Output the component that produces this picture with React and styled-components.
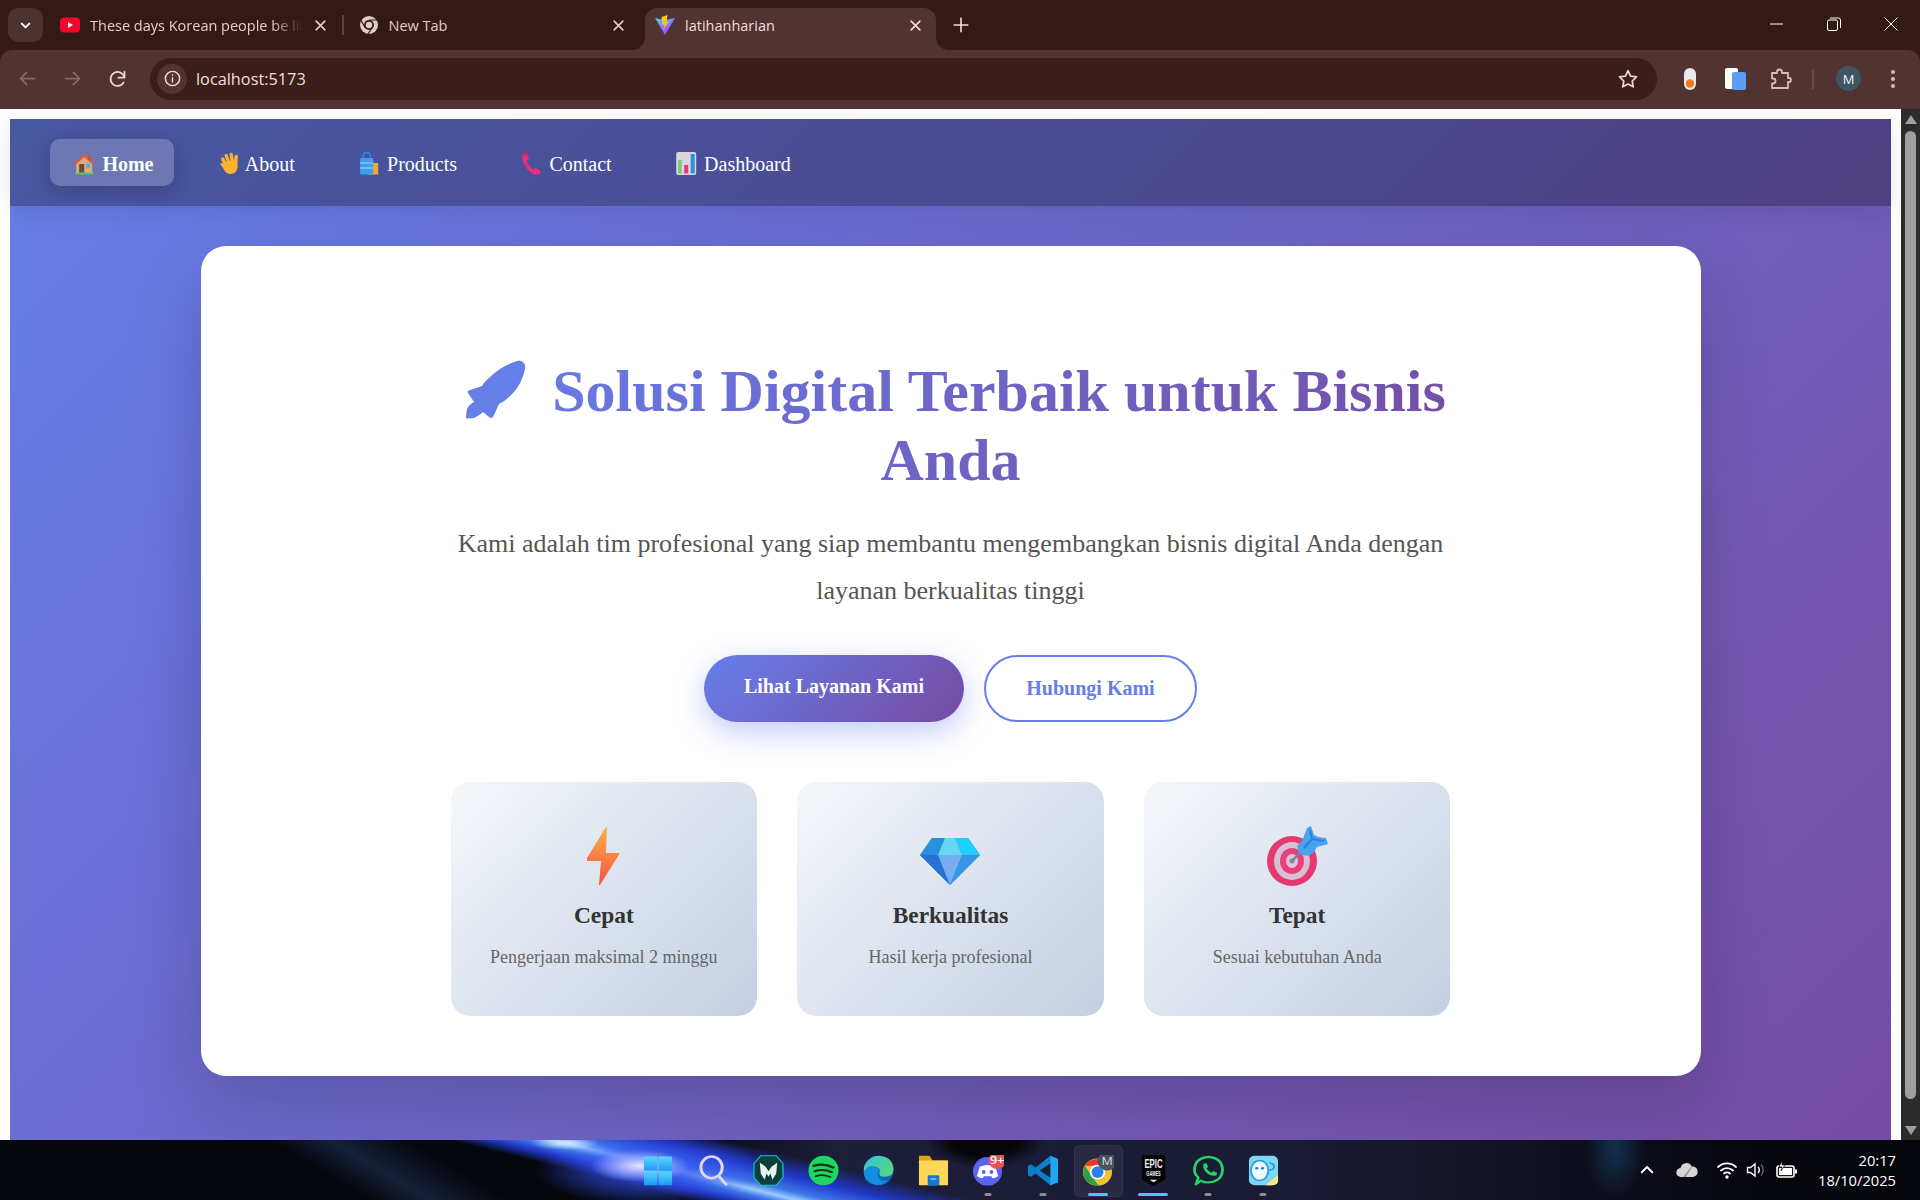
import React from "react";
import styled, { createGlobalStyle } from "styled-components";

const Global = createGlobalStyle`
  html, body { margin: 0; padding: 0; height: 100%; overflow: hidden; background: #fff; }
  #root { height: 100%; }
  * { box-sizing: border-box; }
`;

const Screen = styled.div`
  width: 1920px; height: 1200px; display: flex; flex-direction: column; overflow: hidden;
  font-family: "Liberation Serif", "Times New Roman", serif;
`;

/* ---------- browser chrome ---------- */
const BrowserFrame = styled.header`
  height: 109px; flex: none; background: #331a17; display: flex; flex-direction: column;
  font-family: "Open Sans", "Noto Sans", sans-serif;
`;
const TabStrip = styled.div`
  height: 50px; flex: none; display: flex; align-items: flex-end; padding-left: 8px;
`;
const TabSearch = styled.button`
  width: 35px; height: 34px; margin: 0 5px 8px 0; border: 0; border-radius: 10px; background: #4c3230;
  display: flex; align-items: center; justify-content: center; padding: 0;
`;
const Tab = styled.div`
  position: relative; width: ${p => (p.$active ? "291px" : "298.5px")}; height: 42px;
  display: flex; align-items: center; gap: 10px;
  padding: 0 ${p => (p.$active ? "13px" : "19px")} 8px ${p => (p.$active ? "10px" : "12px")};
  background: ${p => (p.$active ? "#513331" : "transparent")};
  border-radius: 12px 12px 0 0;
  color: ${p => (p.$active ? "#f0dcd8" : "#e4cdc8")};
  font-size: 14.5px;
`;
const TabFlare = styled.span`
  position: absolute; bottom: 0; width: 12px; height: 12px;
  ${p => (p.$side === "left" ? "left: -12px;" : "right: -12px;")}
  background: radial-gradient(circle at ${p => (p.$side === "left" ? "0 0" : "100% 0")}, transparent 11.5px, #513331 12px);
`;
const TabDivider = styled.span`
  position: absolute; right: 3px; top: 7px; width: 1.5px; height: 20px; background: #5d4340;
`;
const TabTitle = styled.span`
  flex: 1; white-space: nowrap; overflow: hidden; min-width: 0;
  ${p => p.$fade && "mask-image: linear-gradient(90deg, #000 85%, transparent 100%);"}
`;
const NewTab = styled.div`
  margin: 0 0 8px 13px; width: 24px; height: 34px; display: flex; align-items: center; justify-content: center;
`;
const WindowControls = styled.div`
  margin-left: auto; align-self: flex-start; display: flex; height: 48px; align-items: center;
  padding-right: 22px; gap: 43px;
`;
const Toolbar = styled.div`
  height: 59px; flex: none; background: #513331; border-radius: 12px 12px 0 0;
  border-bottom: 2px solid #4a3331; display: flex; align-items: center; padding: 0 20px 0 17px;
`;
const NavIcons = styled.div`
  display: flex; align-items: center; gap: 24px; width: 133px; flex: none;
`;
const Omnibox = styled.div`
  width: 1507px; height: 42px; flex: none; background: #3b1e1c; border-radius: 21px; display: flex;
  align-items: center; padding: 0 18px 0 7px; color: #f3dfda; font-size: 16.3px; gap: 9px;
`;
const InfoChip = styled.span`
  width: 30px; height: 30px; border-radius: 50%; background: #513331; display: flex; align-items: center; justify-content: center;
`;
const Url = styled.span`flex: 1;`;
const ExtensionBar = styled.div`
  display: flex; align-items: center; flex: none; margin-left: 21px; gap: 21px;
`;
const ToolDivider = styled.span`width: 2px; height: 20px; background: #6b4c49; margin: 0 0 0 -1px;`;
const Avatar = styled.span`
  width: 25px; height: 25px; border-radius: 50%; background: #3f5662; color: #eef2f4; font-size: 13px;
  display: flex; align-items: center; justify-content: center; margin-left: 1px; margin-right: -1px;
`;

/* ---------- viewport ---------- */
const Viewport = styled.div`
  flex: 1; min-height: 0; display: flex; background: #fff;
`;
const PageArea = styled.div`
  flex: 1; min-width: 0; padding: 10px 10px 0; overflow: hidden;
`;
const Page = styled.div`
  height: 1080px;
  background: linear-gradient(135deg, #667eea 0%, #764ba2 100%);
`;
const Nav = styled.nav`
  height: 87px; padding: 20px 40px; display: flex; gap: 20px; align-items: center;
  background: rgba(0, 0, 0, 0.3);
  box-shadow: 0 5px 25px rgba(0, 0, 0, 0.1);
`;
const NavItem = styled.a`
  height: 47px; padding: 3px ${p => (p.$active ? 21 : 20)}px 0 20px; display: flex; align-items: center; gap: 4px;
  color: #fff; font-size: 20px; border-radius: 10px; font-weight: ${p => (p.$active ? 700 : 400)};
  ${p => p.$active && "margin-right: -2.2px; background: rgba(255,255,255,0.2); box-shadow: 0 5px 19px rgba(0,0,0,0.2);"}
`;
const Main = styled.main`
  width: 1500px; height: 830px; margin: 40px auto 0; background: #fff; border-radius: 25px;
  padding: 111px 0 0; box-shadow: 0 25px 70px rgba(0, 0, 0, 0.18);
`;
const Hero = styled.div`
  width: 1000px; margin: 0 auto; text-align: center;
`;
const Title = styled.h1`
  margin: 0; font-size: 60px; font-weight: 700; line-height: 69px;
  background: linear-gradient(135deg, #667eea 0%, #764ba2 100%);
  -webkit-background-clip: text; background-clip: text; color: transparent;
`;
const RocketMark = styled.svg`
  width: 60px; height: 59px; margin: 0 26px 0 11px; vertical-align: -8px;
`;
const Lead = styled.p`
  margin: 26px 0 40px; font-size: 26px; line-height: 46.8px; color: #555;
`;
const Actions = styled.div`
  display: flex; justify-content: center; gap: 20px;
`;
const PrimaryButton = styled.button`
  width: 260px; height: 67px; border: 0; border-radius: 34px; padding: 0 0 4px; color: #fff;
  font: 700 20px "Liberation Serif", serif;
  background: linear-gradient(135deg, #667eea 0%, #764ba2 100%);
  box-shadow: 0 10px 31px rgba(102, 126, 234, 0.4);
`;
const SecondaryButton = styled.button`
  width: 213px; height: 67px; border: 2.5px solid #667eea; border-radius: 34px; padding: 0; color: #667eea;
  font: 700 20px "Liberation Serif", serif; background: #fff;
`;
const Features = styled.div`
  display: grid; grid-template-columns: repeat(3, 1fr); gap: 40px; margin-top: 60px;
`;
const Feature = styled.article`
  height: 234px; padding-top: 44px; border-radius: 19px; display: flex; flex-direction: column; align-items: center;
  background: linear-gradient(135deg, #f5f7fa 0%, #c3cfe2 100%);
`;
const FeatureIcon = styled.svg`width: 62px; height: 60px; flex: none;`;
const FeatureTitle = styled.h3`
  margin: 16px 0 0; font-size: 23.4px; line-height: 27px; font-weight: 700; color: #333;
`;
const FeatureText = styled.p`
  margin: 18px 0 0; font-size: 18px; line-height: 20px; color: #666;
`;
const Scrollbar = styled.div`
  width: 19px; flex: none; background: #2c2c2c; display: flex; flex-direction: column; align-items: center;
  padding: 6px 0 5px;
`;
const ScrollThumb = styled.div`
  width: 11px; height: 968px; margin-top: 7px; border-radius: 6px; background: #9f9f9f;
`;
const ScrollArrow = styled.span`
  width: 0; height: 0; border-left: 6px solid transparent; border-right: 6px solid transparent;
  ${p => (p.$down ? "border-top: 9px solid #9f9f9f; margin-top: auto;" : "border-bottom: 9px solid #9f9f9f;")}
`;

/* ---------- taskbar ---------- */
const Taskbar = styled.footer`
  position: relative; height: 60px; flex: none; overflow: hidden;
  display: grid; grid-template-columns: 1fr auto 1fr; align-items: center;
  background:
    radial-gradient(ellipse 50px 16px at 640px 26px, #e6e6ff 0%, rgba(170, 180, 255, 0.8) 45%, transparent 100%),
    radial-gradient(ellipse 34px 7px at 565px 3px, #cfe8ff 0%, transparent 100%),
    radial-gradient(ellipse 115px 36px at 650px 30px, rgba(50, 80, 240, 0.9) 0%, rgba(50, 80, 240, 0.5) 55%, transparent 100%),
    linear-gradient(13.8deg, transparent 165px, #2038c8 176px, #3f78e8 184px, #9ccaff 190px, #3f78e8 197px, #2038c8 212px, transparent 232px),
    radial-gradient(ellipse 60px 28px at 985px 0, #05050a 0%, #05050a 55%, transparent 100%),
    linear-gradient(31deg, transparent 190px, #14213a 221px, transparent 262px),
    radial-gradient(ellipse 30px 50px at 1615px 10px, #12304f 0%, transparent 100%),
    linear-gradient(90deg, transparent 680px, #1c1e3a 830px, #1a1b34 1300px, transparent 1780px),
    #06060d;
`;
const AppDock = styled.div`
  position: relative; grid-column: 2; display: flex; height: 60px; padding-left: 1px;
`;
const AppSlot = styled.div`
  position: relative; width: 55px; height: 60px; display: flex; align-items: center; justify-content: center;
  ${p => p.$focused && "&::before { content: ''; position: absolute; left: 3px; right: 3px; top: 5px; bottom: 3px; background: rgba(255,255,255,0.06); border: 1px solid rgba(255,255,255,0.05); border-radius: 6px; }"}
`;
const RunDot = styled.span`
  position: absolute; bottom: 4px; left: 50%; transform: translateX(-50%); height: 3.5px; border-radius: 2px;
  width: ${p => p.$w || 7}px; background: ${p => p.$on ? "#4cc2ff" : "#8c8c92"};
`;
const AppGlyph = styled.svg`position: relative; width: 31px; height: 31px;`;
const Tray = styled.div`
  position: relative; grid-column: 3; display: flex; align-items: center; justify-content: flex-end; padding-right: 24px;
  font-family: "Open Sans", "Noto Sans", sans-serif; color: #fff;
`;
const TrayIcons = styled.div`display: flex; align-items: center; margin-right: 20px;`;
const TrayGlyph = styled.span`display: flex; margin-left: ${p => p.$gap || 0}px;`;
const Clock = styled.div`
  text-align: right; font-size: 14.7px; line-height: 20px;
`;

/* ---------- drawings ---------- */
const E = styled.svg`width: 27.4px; height: 25px; flex: none; margin: -2px 0 0 1px; overflow: visible;`;
const HouseEmoji = () => (
  <E viewBox="1 0 27 25">
    <rect x="5" y="21" width="18" height="2.5" fill="#5cc46a" />
    <path d="M6 11 L14 4 L22 11 V21.5 H6Z" fill="#dcaa7e" />
    <rect x="9" y="13" width="5" height="8.5" fill="#6d4a3a" />
    <rect x="16" y="12.5" width="4" height="4" fill="#3fb4ec" />
    <path d="M3.5 13 L14 3 L24.5 13 L23 14 L14 6 L5 14Z" fill="#e8582f" />
    <rect x="18" y="4" width="2.5" height="5" fill="#c9512f" />
  </E>
);
const WaveEmoji = () => (
  <E viewBox="0 0 27 25">
    <g transform="translate(3.5 0)">
      <path d="M2 14 Q1 18 4 21 M19 3 Q22 2 24 5" stroke="#2f6fc0" strokeWidth="1.2" fill="none" />
      <g stroke="#fbb231" strokeWidth="3.4" strokeLinecap="round">
        <path d="M8.5 13 L6 8" /><path d="M12 11 L9.5 4.5" /><path d="M15.5 10 L14.5 3.5" /><path d="M19 11 L19.5 5.5" />
      </g>
      <path d="M6.5 11 L20.5 9 L21 16 Q20 23 14 23 Q9 23 7 18 L3.5 13 Q4.5 11 6.5 13Z" fill="#fbb231" />
    </g>
  </E>
);
const BagsEmoji = () => (
  <E viewBox="0 0 27 25">
    <rect x="12" y="12" width="10" height="11.5" fill="#f5a738" />
    <path d="M7 8 V5 Q7 1.5 10.5 1.5 Q14 1.5 14 5 V8" stroke="#2f8be0" strokeWidth="1.4" fill="none" />
    <path d="M4 7 H17 V22 L14 23.5 H4Z" fill="#3e9dee" />
    <path d="M4 11 H17 V13 H4Z M4 16 H17 V18 H4Z" fill="#6fbdf6" />
  </E>
);
const PhoneEmoji = () => (
  <E viewBox="0 0 27 25">
    <path d="M4 3 L8 1.5 L11 8 L8.5 10 Q10 15 15 18.5 L18 16.5 L23 21 L20.5 24 Q14 24.5 9 18 Q3.5 11 4 3Z" fill="#e0317e" />
    <path d="M4 3 L8 1.5 L9 4 L5 5.5Z" fill="#c72a6c" />
  </E>
);
const ChartEmoji = () => (
  <E viewBox="0 0 27 25">
    <rect x="3" y="1" width="20" height="23" rx="2" fill="#d8d5dc" />
    <rect x="5" y="9" width="3.4" height="13.5" fill="#6ed06f" />
    <rect x="11" y="14" width="4" height="8.5" fill="#e8357f" />
    <rect x="17.5" y="3" width="4" height="19.5" fill="#2c8fe0" />
  </E>
);

const Bolt = () => (
  <FeatureIcon viewBox="0 0 62 60">
    <defs>
      <linearGradient id="bolt" x1="0.5" y1="0" x2="0.4" y2="1"><stop offset="0" stopColor="#fdb24a" /><stop offset="1" stopColor="#f5523f" /></linearGradient>
    </defs>
    <path d="M33 1 L34 1 L33 27 L47 27 L27 59 L26 59 L28 35 L14 35 L14 32Z" fill="url(#bolt)" />
  </FeatureIcon>
);
const Gem = () => (
  <FeatureIcon viewBox="0 0 62 60">
    <path d="M13 12 H49 L61 29 L31 59 L1 29Z" fill="#2f8fe6" />
    <path d="M13 12 H26 L19 29 H1Z" fill="#2a90da" />
    <path d="M36 12 H49 L61 29 H43Z" fill="#20cdfb" />
    <path d="M26 12 H36 L43 29 H19Z" fill="#66d6f2" />
    <path d="M1 29 H19 L31 59Z" fill="#2a70d4" />
    <path d="M19 29 H43 L31 59Z" fill="#76aef0" />
    <path d="M43 29 H61 L31 59Z" fill="#3795e8" />
  </FeatureIcon>
);
const Target = () => (
  <FeatureIcon viewBox="0 0 62 60">
    <ellipse cx="26" cy="35" rx="25" ry="25" fill="#e5396f" />
    <ellipse cx="26" cy="35" rx="18" ry="19" fill="#d8bfd6" />
    <ellipse cx="26" cy="35" rx="12" ry="13" fill="#e8407a" />
    <ellipse cx="26" cy="35" rx="6" ry="7" fill="#d9c7da" />
    <circle cx="26" cy="35" r="2.5" fill="#8b8aa0" />
    <path d="M26 35 L42 18" stroke="#7d7f96" strokeWidth="2.5" />
    <path d="M33 27 Q29 18 36 15 L41 2 L45 0 L48 9 L52 11 L60 12 L62 18 L51 21 L48 26 Q42 33 33 27Z" fill="#48a4ee" />
    <path d="M38 22 L46 13 L58 15 M46 13 L44 4" stroke="#2a80d8" strokeWidth="2" fill="none" />
  </FeatureIcon>
);

const StrokeIcon = ({ size = 20, color = "#e4cdc8", w = 2, children }) => (
  <svg width={size} height={size} viewBox="0 0 24 24" fill="none" stroke={color} strokeWidth={w} strokeLinecap="round" strokeLinejoin="round" style={{ flex: "none" }}>{children}</svg>
);
const YouTubeIcon = () => (
  <svg width="20" height="20" viewBox="0 0 20 20" style={{ flex: "none" }}>
    <rect x="0" y="2.5" width="20" height="15" rx="4" fill="#f6042e" />
    <path d="M8 7 L13 10 L8 13Z" fill="#fff" />
  </svg>
);
const ChromeTabIcon = () => (
  <svg width="20" height="20" viewBox="0 0 20 20" style={{ flex: "none" }}>
    <circle cx="10" cy="10" r="9" fill="#e0cbc6" />
    <circle cx="10" cy="10" r="5" fill="#331a17" />
    <circle cx="10" cy="10" r="3.2" fill="#e0cbc6" />
    <path d="M10 5 H18 M6 12.5 L2 5.5 M13 13 L9 19" stroke="#331a17" strokeWidth="1.2" />
  </svg>
);
const ViteIcon = () => (
  <svg width="20" height="20" viewBox="0 0 20 20" style={{ flex: "none" }}>
    <defs><linearGradient id="vite" x1="0" y1="0" x2="0.6" y2="1"><stop offset="0" stopColor="#41d1ff" /><stop offset="1" stopColor="#bd34fe" /></linearGradient></defs>
    <path d="M0 3 L10 5 L20 3 L10 20Z" fill="url(#vite)" />
    <path d="M12.5 0 L6.5 2 L7.5 10 L9.5 9.5 L8.5 14 L14 6.5 L11.5 7Z" fill="#ffc517" />
  </svg>
);
const RocketPath = "M53 .5C57 1 60 4 59 9C57 18 53 28 45 35C41 39 37 42 33 44L28 55C27 58 25 59 23 57L17 52C14 55 11 56 8 58L1 58.5C-.5 58 0 56 .5 52C1 47 4 44 8 42L2 33L1.5 31L16 26C18 22 21 20 24 17C32 9 41 4 53 .5Z";

const G = ({ children }) => <AppGlyph viewBox="0 0 32 40" preserveAspectRatio="none">{children}</AppGlyph>;
const DOCK = [
  { key: "win", art: (
    <G>
      <defs><linearGradient id="win" x1="0" y1="0" x2="0" y2="1"><stop offset="0" stopColor="#5cd5ff" /><stop offset="1" stopColor="#1a9cf5" /></linearGradient></defs>
      <rect x="1" y="2" width="14" height="18" fill="url(#win)" /><rect x="16" y="2" width="14" height="18" fill="url(#win)" />
      <rect x="1" y="21" width="14" height="18" fill="url(#win)" /><rect x="16" y="21" width="14" height="18" fill="url(#win)" />
    </G>) },
  { key: "search", art: (
    <G>
      <ellipse cx="14" cy="16" rx="11" ry="14" fill="none" stroke="#dad8ea" strokeWidth="3.2" />
      <path d="M22 28 L29 38" stroke="#dad8ea" strokeWidth="3.2" strokeLinecap="round" />
    </G>) },
  { key: "predator", art: (
    <G>
      <path d="M8 1 H24 L31 11 V29 L24 39 H8 L1 29 V11Z" fill="#0d3f3c" stroke="#19c8d8" strokeWidth="1.2" />
      <path d="M7 10 L13 15 L16 21 L19 15 L25 10 L24 24 L20 32 L18 24 L16 28 L14 24 L12 32 L8 24Z" fill="#e8f2f0" />
    </G>) },
  { key: "spotify", art: (
    <G>
      <ellipse cx="16" cy="20" rx="15.5" ry="19" fill="#1ed760" />
      <g stroke="#14301d" fill="none" strokeLinecap="round"><path d="M6 14 Q16 10 26 16" strokeWidth="3" /><path d="M7 21 Q16 17 24.5 22" strokeWidth="2.6" /><path d="M8 27.5 Q15 24 23 28.5" strokeWidth="2.2" /></g>
    </G>) },
  { key: "edge", art: (
    <G>
      <defs><linearGradient id="edge" x1="0" y1="0" x2="1" y2="1"><stop offset="0" stopColor="#36c3d8" /><stop offset="1" stopColor="#5cd96f" /></linearGradient></defs>
      <ellipse cx="16" cy="20" rx="15.5" ry="19" fill="#1364b8" />
      <path d="M1 15 Q6 1 16 1 Q31 2 31.5 19 Q31 28 22 28 Q16 28 17 23 Q19 16 12 15 Q5 15 1 23Z" fill="url(#edge)" />
      <path d="M1 21 Q6 12 12 15 Q19 17 15 25 Q16 35 26 33 Q20 39 14 39 Q0 35 1 21Z" fill="#0f8fdc" />
    </G>) },
  { key: "files", art: (
    <G>
      <path d="M1 1 H12 L15 7 H31 V38 H1Z" fill="#e0a012" />
      <rect x="1" y="7" width="30" height="32" rx="1" fill="#fdd75a" />
      <rect x="10" y="26" width="12" height="13" rx="1" fill="#1478d0" />
      <rect x="13" y="30" width="6" height="1.8" fill="#8ccbf6" />
    </G>) },
  { key: "discord", dot: true, art: (
    <G>
      <ellipse cx="15" cy="21" rx="15" ry="18.5" fill="#5865f2" />
      <path d="M7 15 Q15 11 23 15 L26 27 Q23 30 20 30 L19 27.5 H11 L10 30 Q7 30 4 27Z" fill="#fff" />
      <ellipse cx="11" cy="22" rx="2" ry="2.6" fill="#5865f2" /><ellipse cx="19" cy="22" rx="2" ry="2.6" fill="#5865f2" />
      <ellipse cx="25" cy="7" rx="9" ry="11" fill="#e8505a" />
      <text x="25" y="12" textAnchor="middle" fontSize="13" fontFamily="Open Sans, sans-serif" fontWeight="600" fill="#fff">9+</text>
    </G>) },
  { key: "code", dot: true, art: (
    <G>
      <path d="M23 1 L31 5 V35 L23 39 L8 24 L3 28 L0 26 V14 L3 12 L8 16Z" fill="#0e7ec9" />
      <path d="M23 1 L31 5 V35 L23 39Z" fill="#22a5ee" />
      <path d="M23 11 V29 L12 20Z" fill="#1a1c36" />
    </G>) },
  { key: "chrome", focused: true, dot: "wide", art: (
    <G>
      <ellipse cx="15" cy="22" rx="15" ry="17.5" fill="#f1c233" />
      <path d="M2 14 A15 17.5 0 0 1 28 14 H15Z" fill="#e5392d" />
      <path d="M2 14 L10 29 L16 39.5 A15 17.5 0 0 1 2 14Z" fill="#2f9e4a" />
      <ellipse cx="15" cy="22" rx="8" ry="9.5" fill="#fff" />
      <ellipse cx="15" cy="22" rx="6.2" ry="7.6" fill="#2f7fe8" />
      <ellipse cx="25" cy="8" rx="10" ry="12" fill="#4a5259" />
      <text x="25" y="13" textAnchor="middle" fontSize="13" fontFamily="Open Sans, sans-serif" fill="#d8dce0">M</text>
    </G>) },
  { key: "epic", dot: "epic", art: (
    <G>
      <path d="M4 2 Q4 0 6 0 H26 Q28 0 28 2 V32 L16 40 L4 32Z" fill="#050505" />
      <text transform="translate(16 17) scale(.62 1.3)" textAnchor="middle" fontSize="13" fontFamily="Liberation Sans, sans-serif" fontWeight="700" fill="#f0f0f0">EPIC</text>
      <text transform="translate(16 27) scale(.62 1.3)" textAnchor="middle" fontSize="6.5" fontFamily="Liberation Sans, sans-serif" fontWeight="700" fill="#f0f0f0">GAMES</text>
      <path d="M12 32 H20 L16 35Z" fill="#f0f0f0" />
    </G>) },
  { key: "whatsapp", dot: true, art: (
    <G>
      <path d="M3 38 L5.5 29 Q1.5 25 1.5 19 Q2 4 16 2.5 Q30 4 30.5 19 Q30 34 16 35.5 Q11 35.5 8 33Z" fill="none" stroke="#25d366" strokeWidth="2.8" strokeLinejoin="round" />
      <path d="M11 11 L14 10.5 L15.5 15 L14 17.5 Q15.5 21 19 23 L21 21 L25 23 L24 26.5 Q17.5 28 13 21.5 Q9.5 16 11 11Z" fill="#25d366" />
    </G>) },
  { key: "qq", dot: true, art: (
    <G>
      <rect x="1" y="1" width="30" height="38" rx="6" fill="#7fd6f7" />
      <path d="M18 39 L31 26 V33 Q31 39 25 39Z" fill="#fbe78a" />
      <ellipse cx="12" cy="20" rx="9" ry="13" fill="#eafaff" stroke="#2d9be8" strokeWidth="2" />
      <circle cx="9" cy="17" r="1.6" fill="#1f7fd0" /><circle cx="15" cy="17" r="1.6" fill="#1f7fd0" />
      <path d="M22 10 Q27 11 27 16 Q26 20 22 19" fill="none" stroke="#2d9be8" strokeWidth="2" />
    </G>) },
];

const features = [
  { icon: <Bolt />, title: "Cepat", text: "Pengerjaan maksimal 2 minggu" },
  { icon: <Gem />, title: "Berkualitas", text: "Hasil kerja profesional" },
  { icon: <Target />, title: "Tepat", text: "Sesuai kebutuhan Anda" },
];

export default function App() {
  return (
    <Screen>
      <Global />
      <BrowserFrame>
        <TabStrip>
          <TabSearch aria-label="Search tabs">
            <StrokeIcon size={15} color="#fff" w={3.2}><path d="M6 9l6 6 6-6" /></StrokeIcon>
          </TabSearch>
          <Tab>
            <YouTubeIcon />
            <TabTitle $fade>These days Korean people be like</TabTitle>
            <StrokeIcon size={15} w={2.6}><path d="M5 5l14 14M19 5L5 19" /></StrokeIcon>
            <TabDivider />
          </Tab>
          <Tab>
            <ChromeTabIcon />
            <TabTitle>New Tab</TabTitle>
            <StrokeIcon size={15} w={2.6}><path d="M5 5l14 14M19 5L5 19" /></StrokeIcon>
          </Tab>
          <Tab $active>
            <TabFlare $side="left" />
            <ViteIcon />
            <TabTitle>latihanharian</TabTitle>
            <StrokeIcon size={15} color="#f0dcd8" w={2.6}><path d="M5 5l14 14M19 5L5 19" /></StrokeIcon>
            <TabFlare $side="right" />
          </Tab>
          <NewTab>
            <StrokeIcon size={18} color="#f0dcd8" w={2.2}><path d="M12 3v18M3 12h18" /></StrokeIcon>
          </NewTab>
          <WindowControls>
            <svg width="14" height="14" viewBox="0 0 14 14"><path d="M0 7h13" stroke="#fff" strokeWidth="1" /></svg>
            <svg width="14" height="14" viewBox="0 0 14 14" fill="none" stroke="#fff"><rect x=".5" y="3" width="10" height="10.5" rx="1.5" /><path d="M3 1h8.5a2 2 0 012 2v8" /></svg>
            <svg width="14" height="14" viewBox="0 0 14 14"><path d="M.5.5l13 13M13.5.5l-13 13" stroke="#fff" strokeWidth="1" /></svg>
          </WindowControls>
        </TabStrip>
        <Toolbar>
          <NavIcons>
            <StrokeIcon size={21} color="#866a68"><path d="M20 12H4M11 5l-7 7 7 7" /></StrokeIcon>
            <StrokeIcon size={21} color="#866a68"><path d="M4 12h16M13 5l7 7-7 7" /></StrokeIcon>
            <StrokeIcon size={21} color="#ecd6d1"><path d="M20 11a8 8 0 10-.9 5.5M20 4v7h-7" /></StrokeIcon>
          </NavIcons>
          <Omnibox>
            <InfoChip>
              <StrokeIcon size={19} color="#f3dfda" w={1.8}><circle cx="12" cy="12" r="9" /><path d="M12 11v5.5M12 7.5v.5" /></StrokeIcon>
            </InfoChip>
            <Url>localhost:5173</Url>
            <StrokeIcon size={22} color="#ecd6d1" w={1.9}><path d="M12 3l2.8 5.8 6.4.9-4.6 4.5 1.1 6.3L12 17.5l-5.7 3 1.1-6.3L2.8 9.7l6.4-.9z" /></StrokeIcon>
          </Omnibox>
          <ExtensionBar>
            <svg width="24" height="24" viewBox="0 0 24 24"><rect x="6" y="1" width="12" height="22" rx="6" fill="#e8eaec" /><circle cx="12" cy="16.5" r="4.2" fill="#f07a24" /></svg>
            <svg width="24" height="24" viewBox="0 0 24 24"><rect x="2" y="1" width="13" height="21" rx="2" fill="#fff" /><rect x="9" y="5" width="14" height="18" rx="2" fill="#5b9ff5" /></svg>
            <StrokeIcon size={24} color="#e0b9b2" w={1.8}><path d="M4 6h5V5a2.5 2.5 0 015 0v1h6v5h1a2 2 0 010 4h-1v6H4v-4.5h1a2.5 2.5 0 000-5H4z" /></StrokeIcon>
            <ToolDivider />
            <Avatar>M</Avatar>
            <svg width="24" height="24" viewBox="0 0 24 24" fill="#e0b9b2"><circle cx="12" cy="5" r="2" /><circle cx="12" cy="12" r="2" /><circle cx="12" cy="19" r="2" /></svg>
          </ExtensionBar>
        </Toolbar>
      </BrowserFrame>

      <Viewport>
        <PageArea>
          <Page>
            <Nav>
              <NavItem $active><HouseEmoji />Home</NavItem>
              <NavItem><WaveEmoji />About</NavItem>
              <NavItem><BagsEmoji />Products</NavItem>
              <NavItem><PhoneEmoji />Contact</NavItem>
              <NavItem><ChartEmoji />Dashboard</NavItem>
            </Nav>
            <Main>
              <Hero>
                <Title>
                  <RocketMark viewBox="0 0 60 59"><path d={RocketPath} fill="#667fe8" /></RocketMark>
                  Solusi Digital Terbaik untuk Bisnis Anda
                </Title>
                <Lead>Kami adalah tim profesional yang siap membantu mengembangkan bisnis digital Anda dengan layanan berkualitas tinggi</Lead>
                <Actions>
                  <PrimaryButton>Lihat Layanan Kami</PrimaryButton>
                  <SecondaryButton>Hubungi Kami</SecondaryButton>
                </Actions>
                <Features>
                  {features.map(f => (
                    <Feature key={f.title}>
                      {f.icon}
                      <FeatureTitle>{f.title}</FeatureTitle>
                      <FeatureText>{f.text}</FeatureText>
                    </Feature>
                  ))}
                </Features>
              </Hero>
            </Main>
          </Page>
        </PageArea>
        <Scrollbar>
          <ScrollArrow />
          <ScrollThumb />
          <ScrollArrow $down />
        </Scrollbar>
      </Viewport>

      <Taskbar>
        <AppDock>
          {DOCK.map(a => (
            <AppSlot key={a.key} $focused={a.focused}>
              {a.art}
              {a.dot === true && <RunDot />}
              {a.dot === "wide" && <RunDot $on $w={20} />}
              {a.dot === "epic" && <RunDot $on $w={30} />}
            </AppSlot>
          ))}
        </AppDock>
        <Tray>
          <TrayIcons>
            <TrayGlyph><StrokeIcon size={18} color="#fff" w={2.4}><path d="M5 15l7-7 7 7" /></StrokeIcon></TrayGlyph>
            <TrayGlyph $gap={20}><svg width="22" height="16" viewBox="0 0 22 16"><path d="M5 15a4.5 4.5 0 01-.5-9 6 6 0 0111.3-1.5A5 5 0 0117 15z" fill="#d6d6d6" /><path d="M7 15l8-10 1 0 -6 10z" fill="#9a9a9a" /></svg></TrayGlyph>
            <TrayGlyph $gap={19}><svg width="20" height="18" viewBox="0 0 20 18" fill="none" stroke="#fff" strokeWidth="1.8" strokeLinecap="round"><path d="M1 6a13 13 0 0118 0M4 9.5a9 9 0 0112 0M7 12.5a5 5 0 016 0" /><circle cx="10" cy="16" r=".8" fill="#fff" /></svg></TrayGlyph>
            <TrayGlyph $gap={9}><svg width="20" height="18" viewBox="0 0 20 18" fill="none" stroke="#fff" strokeWidth="1.4"><path d="M1.5 6.5h3L9 3v12L4.5 11.5h-3z" /><path d="M12 6a4 4 0 010 6" /><path d="M15 3.5a8 8 0 010 11" stroke="#666" /></svg></TrayGlyph>
            <TrayGlyph $gap={10}><svg width="22" height="18" viewBox="0 0 22 18" fill="none"><rect x="1" y="5" width="17" height="11" rx="2" fill="#1a1a1a" stroke="#fff" strokeWidth="1.6" /><rect x="3" y="7" width="13" height="7" fill="#fff" /><rect x="19" y="8.5" width="2" height="4" fill="#fff" /><path d="M6 0L3 6h3l-1 4 4-6H6z" fill="#fff" stroke="#06060d" strokeWidth=".7" /></svg></TrayGlyph>
          </TrayIcons>
          <Clock>20:17<br />18/10/2025</Clock>
        </Tray>
      </Taskbar>
    </Screen>
  );
}
